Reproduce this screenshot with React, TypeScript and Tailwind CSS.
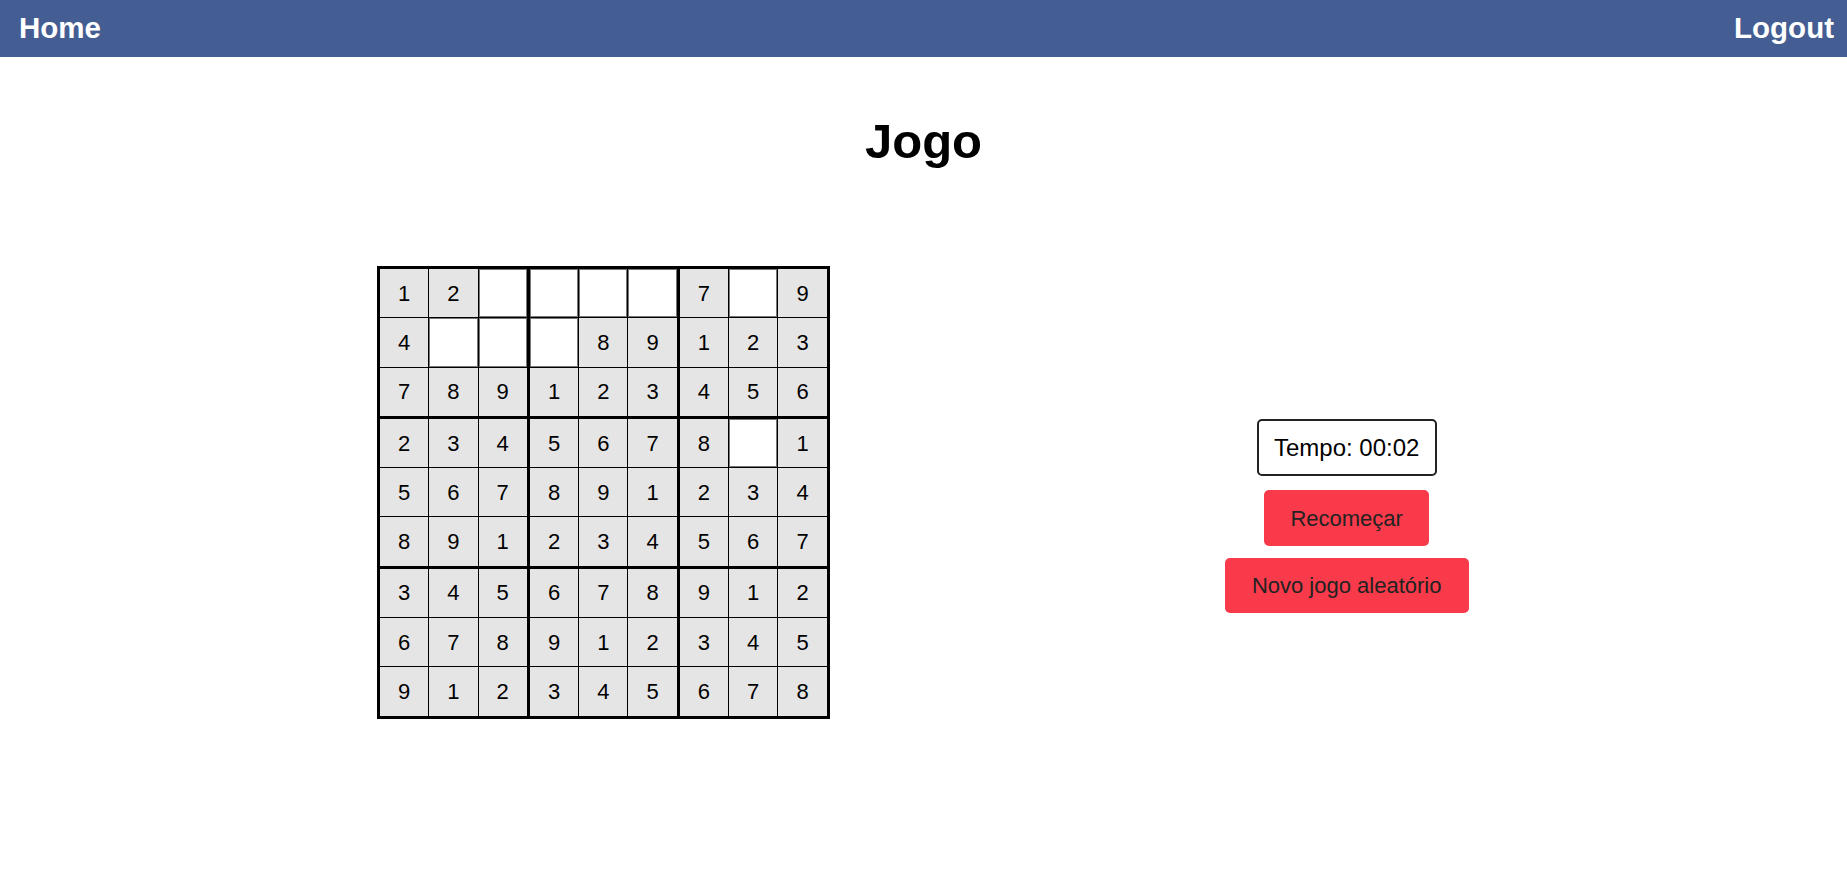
const board: (number | null)[][] = [
    [1, 2, null, null, null, null, 7, null, 9],
    [4, null, null, null, 8, 9, 1, 2, 3],
    [7, 8, 9, 1, 2, 3, 4, 5, 6],
    [2, 3, 4, 5, 6, 7, 8, null, 1],
    [5, 6, 7, 8, 9, 1, 2, 3, 4],
    [8, 9, 1, 2, 3, 4, 5, 6, 7],
    [3, 4, 5, 6, 7, 8, 9, 1, 2],
    [6, 7, 8, 9, 1, 2, 3, 4, 5],
    [9, 1, 2, 3, 4, 5, 6, 7, 8],
];

// borders sit inside the cell box, so thick-edged cells are wider/taller
function Cell({ value, row, col }: { value: number | null; row: number; col: number }) {
    const right = col === 8 ? '' : col % 3 === 2 ? 'border-r-[3px]' : 'border-r';
    const bottom = row === 8 ? 'h-[48.3px]' : row % 3 === 2 ? 'border-b-[3px] h-[51.3px]' : 'border-b h-[49.3px]';

    return (
        <div className={`${right} ${bottom} border-black bg-[#e5e5e5] flex items-center justify-center`}>
            {value === null ? (
                <input
                    type="text"
                    className="w-full h-full bg-white border border-[#767676] outline-none text-center text-[22px]"
                />
            ) : (
                <span className="text-[22px] text-black">{value}</span>
            )}
        </div>
    );
}

export default function App() {
    return (
        <div className="min-h-[887px] bg-white font-['Liberation_Sans',Arial,sans-serif]">
            <nav className="h-[57px] bg-[#445e93] flex items-center justify-between pl-[19px] pr-[13px]">
                <a className="text-white font-bold text-[29.5px]">Home</a>
                <a className="text-white font-bold text-[29.5px]">Logout</a>
            </nav>

            <h1 className="mt-[60px] text-center font-bold text-[49px] leading-[49px] text-black">Jogo</h1>

            <div className="flex items-start mt-[100px] pl-[377px]">
                <div className="grid grid-cols-[49.3px_49.3px_51.3px_49.3px_49.3px_51.3px_49.3px_49.3px_48.3px] border-[3px] border-black">
                    {board.map((r, i) => r.map((v, j) => <Cell key={`${i}-${j}`} value={v} row={i} col={j} />))}
                </div>

                <div className="w-[300px] ml-[367px] mt-[153px] flex flex-col items-center">
                    <div className="w-[180px] h-[57px] border-2 border-[#222] rounded-[5px] flex items-center justify-center text-[24px] text-black">
                        Tempo: 00:02
                    </div>
                    <button className="mt-[14px] w-[165px] h-[56px] bg-[#f93a4a] rounded-[5px] text-[22px] text-[#222]">
                        Recomeçar
                    </button>
                    <button className="mt-[12px] w-[244px] h-[55px] bg-[#f93a4a] rounded-[5px] text-[22px] text-[#222]">
                        Novo jogo aleatório
                    </button>
                </div>
            </div>
        </div>
    );
}
